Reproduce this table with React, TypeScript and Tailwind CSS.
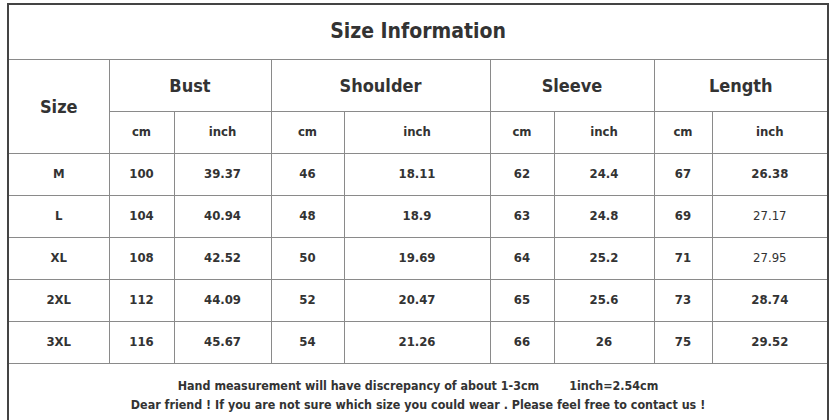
const rows: [string, string, string, string, string, string, string, string, string][] = [
  ['M', '100', '39.37', '46', '18.11', '62', '24.4', '67', '26.38'],
  ['L', '104', '40.94', '48', '18.9', '63', '24.8', '69', '27.17'],
  ['XL', '108', '42.52', '50', '19.69', '64', '25.2', '71', '27.95'],
  ['2XL', '112', '44.09', '52', '20.47', '65', '25.6', '73', '28.74'],
  ['3XL', '116', '45.67', '54', '21.26', '66', '26', '75', '29.52'],
]

// the two length values printed in a lighter weight in the source chart
const lightCells = ['27.17', '27.95']

const widths = [101, 65, 97, 73, 146, 64, 100, 58, 116]

const cell = 'border border-[#8a8a8a] text-center align-middle p-0'

export default function App() {
  return (
    <div className="min-h-[420px] bg-white pl-[7px] pt-[3px] font-['DejaVu_Sans_Condensed','DejaVu_Sans',sans-serif] text-[#333]">
      <table className="w-[821px] table-fixed border-collapse border-2 border-[#444]">
        <colgroup>
          {widths.map((w, i) => (
            <col key={i} style={{ width: w }} />
          ))}
        </colgroup>
        <tbody>
          <tr className="h-[55px]">
            <td colSpan={9} className="border-b border-[#8a8a8a] text-center text-[21px] font-bold">
              Size Information
            </td>
          </tr>
          <tr className="h-[52px]">
            <td rowSpan={2} className={`${cell} text-[18px] font-bold`}>Size</td>
            {['Bust', 'Shoulder', 'Sleeve', 'Length'].map((h) => (
              <td key={h} colSpan={2} className={`${cell} text-[18px] font-bold`}>
                {h}
              </td>
            ))}
          </tr>
          <tr className="h-[42px]">
            {['cm', 'inch', 'cm', 'inch', 'cm', 'inch', 'cm', 'inch'].map((u, i) => (
              <td key={i} className={`${cell} text-[13px] font-bold`}>
                {u}
              </td>
            ))}
          </tr>
          {rows.map((r) => (
            <tr key={r[0]} className="h-[42px]">
              {r.map((v, i) => (
                <td
                  key={i}
                  className={`${cell} text-[13px] ${lightCells.includes(v) ? 'font-normal' : 'font-bold'}`}
                >
                  {v}
                </td>
              ))}
            </tr>
          ))}
          <tr>
            <td colSpan={9} className="border-t border-[#8a8a8a] pt-[12px] pb-[10px] text-center text-[12.4px] font-bold leading-[19px]">
              <div>
                Hand measurement will have discrepancy of about 1-3cm
                <span className="ml-[30px]">1inch=2.54cm</span>
              </div>
              <div>Dear friend ! If you are not sure which size you could wear . Please feel free to contact us !</div>
            </td>
          </tr>
        </tbody>
      </table>
    </div>
  )
}
